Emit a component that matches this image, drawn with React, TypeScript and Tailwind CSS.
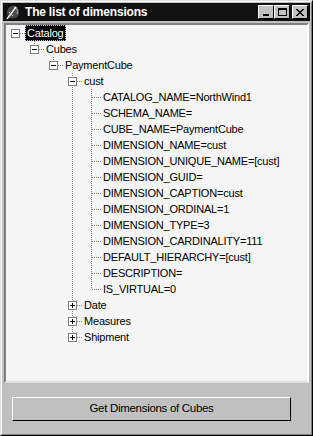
type Node = {
  label: string;
  open?: boolean;
  children?: Node[];
};

const leaves = [
  "CATALOG_NAME=NorthWind1",
  "SCHEMA_NAME=",
  "CUBE_NAME=PaymentCube",
  "DIMENSION_NAME=cust",
  "DIMENSION_UNIQUE_NAME=[cust]",
  "DIMENSION_GUID=",
  "DIMENSION_CAPTION=cust",
  "DIMENSION_ORDINAL=1",
  "DIMENSION_TYPE=3",
  "DIMENSION_CARDINALITY=111",
  "DEFAULT_HIERARCHY=[cust]",
  "DESCRIPTION=",
  "IS_VIRTUAL=0",
];

const tree: Node = {
  label: "Catalog",
  open: true,
  children: [
    {
      label: "Cubes",
      open: true,
      children: [
        {
          label: "PaymentCube",
          open: true,
          children: [
            { label: "cust", open: true, children: leaves.map((l) => ({ label: l })) },
            { label: "Date", children: [{ label: "x" }] },
            { label: "Measures", children: [{ label: "x" }] },
            { label: "Shipment", children: [{ label: "x" }] },
          ],
        },
      ],
    },
  ],
};

type Row = {
  node: Node;
  level: number;
  lines: boolean[];
  isLast: boolean;
  isRoot: boolean;
};

// lines[i] = does the ancestor at depth i still have siblings below
function flatten(node: Node, level: number, lines: boolean[], isLast: boolean, out: Row[]) {
  out.push({ node, level, lines, isLast, isRoot: level === 0 });
  if (node.open && node.children) {
    node.children.forEach((c, i) => {
      const last = i === node.children!.length - 1;
      flatten(c, level + 1, [...lines, !isLast], last, out);
    });
  }
}

const rows: Row[] = [];
flatten(tree, 0, [], true, rows);

function Dots({ top, bottom, across }: { top?: boolean; bottom?: boolean; across?: boolean }) {
  return (
    <svg width="19" height="16" className="absolute left-0 top-0" shapeRendering="crispEdges">
      {top && <line x1="9.5" y1="0" x2="9.5" y2="8" stroke="#808080" strokeDasharray="1 1" />}
      {bottom && <line x1="9.5" y1="8" x2="9.5" y2="16" stroke="#808080" strokeDasharray="1 1" />}
      {across && <line x1="10" y1="8.5" x2="19" y2="8.5" stroke="#808080" strokeDasharray="1 1" />}
    </svg>
  );
}

function Expander({ open }: { open: boolean }) {
  return (
    <div className="absolute left-[5px] top-[4px] w-[9px] h-[9px] border border-[#808080] bg-white">
      <div className="absolute left-[1px] top-[3px] w-[5px] h-[1px] bg-black" />
      {!open && <div className="absolute left-[3px] top-[1px] w-[1px] h-[5px] bg-black" />}
    </div>
  );
}

function TreeRow({ row }: { row: Row }) {
  const hasKids = !!row.node.children;
  const selected = row.isRoot;
  return (
    <div className="flex h-4 items-center">
      {row.lines.slice(0, row.level).map((on, i) => (
        <div key={i} className="relative w-[19px] h-4 shrink-0">
          {on && <Dots top bottom />}
        </div>
      ))}
      <div className="relative w-[19px] h-4 shrink-0">
        <Dots top={!row.isRoot} bottom={!row.isLast} across />
        {hasKids && <Expander open={!!row.node.open} />}
      </div>
      <span
        className={
          selected
            ? "h-4 leading-[14px] px-[1px] bg-black text-white border border-dotted border-[#c0c0c0] whitespace-nowrap"
            : "h-4 leading-4 px-[2px] text-black whitespace-nowrap"
        }
      >
        {row.node.label}
      </span>
    </div>
  );
}

function CaptionButton({ children }: { children: React.ReactNode }) {
  return (
    <div className="w-4 h-[14px] bg-[#c0c0c0] border border-t-white border-l-white border-r-black border-b-black flex items-center justify-center">
      {children}
    </div>
  );
}

export default function App() {
  return (
    <div
      className="w-[313px] h-[436px] bg-[#c0c0c0] border-t border-l border-r border-b border-t-[#dfdfdf] border-l-[#dfdfdf] border-r-black border-b-black"
      style={{ fontFamily: '"Liberation Sans", Arial, sans-serif' }}
    >
      <div className="h-full border-t border-l border-r border-b border-t-white border-l-white border-r-[#808080] border-b-[#808080] p-[1px] flex flex-col">
        {/* Title bar */}
        <div className="h-[18px] bg-[#111111] flex items-center pl-[2px] pr-[2px] shrink-0">
          <svg width="16" height="16" viewBox="0 0 16 16" className="shrink-0">
            <path d="M2 9 C2 4 6 1 10 2 C14 3 15 8 13 12 C11 15 5 15 3 13 Z" fill="#4a4a4a" />
            <path d="M9 3 C12 4 13 7 12 10" stroke="#8a8a8a" strokeWidth="1.5" fill="none" />
            <path d="M2 15 L11 3" stroke="#f0f0f0" strokeWidth="1.4" />
            <path d="M4 8 L8 12" stroke="#d0d0d0" strokeWidth="1" />
          </svg>
          <span className="ml-[4px] text-white font-bold text-[12px] tracking-[-0.2px] leading-none">
            The list of dimensions
          </span>
          <div className="ml-auto flex items-center">
            <CaptionButton>
              <div className="w-[6px] h-[2px] bg-black mt-[6px] -ml-[1px]" />
            </CaptionButton>
            <CaptionButton>
              <div className="w-[9px] h-[8px] border border-black border-t-2" />
            </CaptionButton>
            <div className="w-[2px]" />
            <CaptionButton>
              <svg width="8" height="7" viewBox="0 0 8 7" shapeRendering="crispEdges">
                <path d="M0 0h2v1h-2zM6 0h2v1h-2zM1 1h2v1h-2zM5 1h2v1h-2zM2 2h4v1h-4zM3 3h2v1h-2zM2 4h4v1h-4zM1 5h2v1h-2zM5 5h2v1h-2zM0 6h2v1h-2zM6 6h2v1h-2z" fill="#000" />
              </svg>
            </CaptionButton>
          </div>
        </div>

        {/* Tree view */}
        <div className="mt-[2px] mx-[1px] h-[360px] shrink-0 border-2 border-t-[#808080] border-l-[#808080] border-r-white border-b-[#dfdfdf]">
          <div className="h-full bg-[#f5f5f5] text-[11px] tracking-[-0.2px] text-black overflow-hidden">
            {rows.map((r, i) => (
              <TreeRow key={i} row={r} />
            ))}
          </div>
        </div>

        {/* Button */}
        <div className="pt-[12px] pl-[9px]">
          <button className="w-[279px] h-6 bg-[#c0c0c0] border border-t-white border-l-white border-r-black border-b-black text-[11.5px] tracking-[-0.3px] text-black">
            Get Dimensions of Cubes
          </button>
        </div>
      </div>
    </div>
  );
}
